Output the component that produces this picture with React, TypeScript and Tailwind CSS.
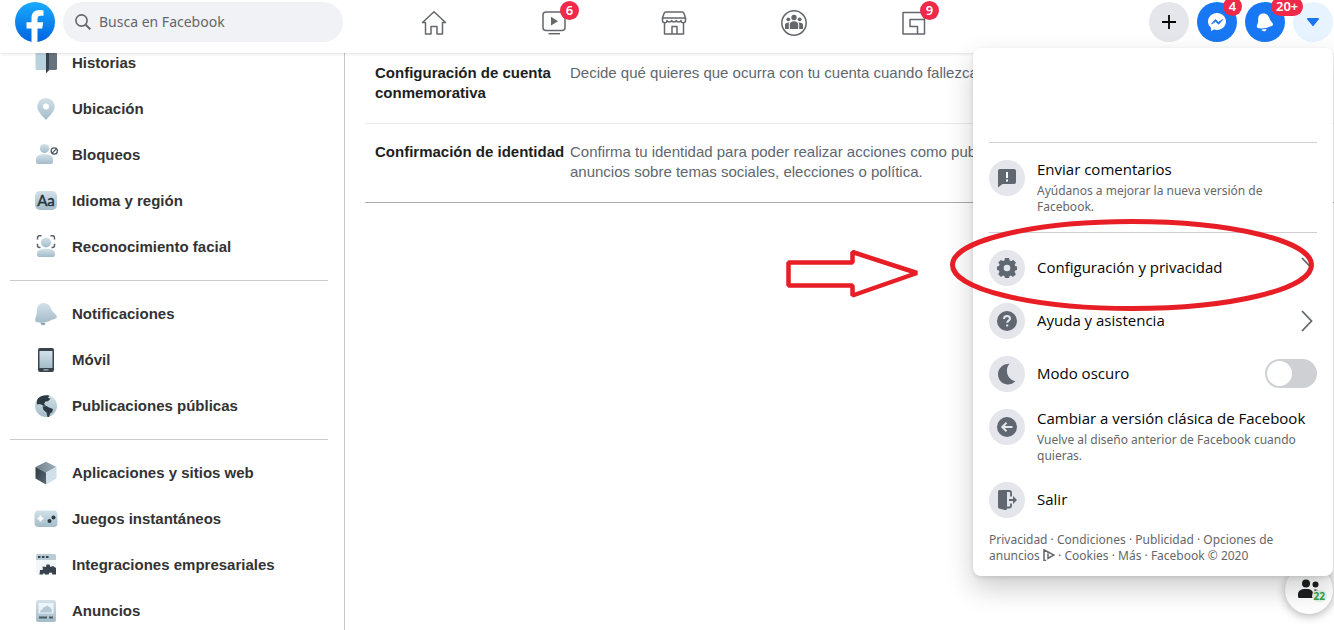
import React from "react";

type IconProps = { className?: string };

const Defs = () => (
  <svg className="absolute h-0 w-0" aria-hidden="true">
    <defs>
      <linearGradient id="pale" x1="0" y1="0" x2="0" y2="1">
        <stop offset="0" stopColor="#d3e1e9" />
        <stop offset="1" stopColor="#a3bcc9" />
      </linearGradient>
      <linearGradient id="dark" x1="0" y1="0" x2="1" y2="1">
        <stop offset="0" stopColor="#2c3a44" />
        <stop offset="1" stopColor="#5d6b77" />
      </linearGradient>
      <linearGradient id="brand" x1="0" y1="0" x2="0" y2="1">
        <stop offset="0" stopColor="#18acfe" />
        <stop offset="1" stopColor="#0163e0" />
      </linearGradient>
      <linearGradient id="cubeTop" x1="0" y1="0" x2="1" y2="0">
        <stop offset="0" stopColor="#6f7f89" />
        <stop offset="1" stopColor="#9db0bb" />
      </linearGradient>
    </defs>
  </svg>
);

const svg24 = (children: React.ReactNode) => (
  <svg viewBox="0 0 24 24" className="h-6 w-6 shrink-0" aria-hidden="true">
    {children}
  </svg>
);

const StoriesIcon = () =>
  svg24(
    <>
      <rect x="1.500" y="1" width="12" height="18" rx="1.500" fill="#b9d3de" />
      <path d="M12 3l2-2h7a2 2 0 0 1 2 2v14.500a1.500 1.500 0 0 1-1.500 1.500h-6L12 22.500z" fill="#66727d" />
      <path d="M12 1h3v17l-3 4z" fill="#37424c" />
    </>
  );
const PinIcon = () =>
  svg24(
    <>
      <path d="M12 1c-5 0-8.700 3.700-8.700 8.500 0 5.500 6 10 8.700 13.500 2.700-3.500 8.700-8 8.700-13.500C20.700 4.700 17 1 12 1z" fill="url(#pale)" />
      <circle cx="12" cy="9.500" r="3" fill="#fff" />
    </>
  );
const BlockIcon = () =>
  svg24(
    <>
      <circle cx="10.500" cy="5.500" r="4.600" fill="url(#pale)" />
      <path d="M2 19v-2.500C2 13 5 11.200 10.500 11.200s8.500 1.800 8.500 5.300V19a2 2 0 0 1-2 2H4a2 2 0 0 1-2-2z" fill="url(#pale)" />
      <circle cx="20.300" cy="8" r="3.100" fill="#fff" stroke="#4d5963" strokeWidth="1.300" />
      <path d="M18.200 10.100l4.200-4.200" stroke="#4d5963" strokeWidth="1.300" />
    </>
  );
const LanguageIcon = () =>
  svg24(
    <>
      <rect x="1" y="2" width="22" height="19" rx="5" fill="url(#pale)" />
      <text x="12" y="16.500" textAnchor="middle" fontSize="15" fontWeight="400" fill="#25333c" stroke="#25333c" strokeWidth="0.400" fontFamily="Lato, sans-serif">
        Aa
      </text>
    </>
  );
const FaceIcon = () =>
  svg24(
    <>
      <circle cx="12" cy="7.500" r="5" fill="url(#pale)" />
      <path d="M3 20v-1.500c0-3 3-4.700 9-4.700s9 1.700 9 4.700V20a2 2 0 0 1-2 2H5a2 2 0 0 1-2-2z" fill="url(#pale)" />
      <path d="M3.500 4.500V2.700a2 2 0 0 1 2-2h2M16.500.7h2a2 2 0 0 1 2 2v1.800M3.500 8.700v1.800a2 2 0 0 0 2 2h1M20.500 8.700v1.800a2 2 0 0 1-2 2h-1" fill="none" stroke="#56636d" strokeWidth="1.500" />
    </>
  );
const SideBellIcon = () =>
  svg24(
    <>
      <path d="M6.500 20.500c2 .2 3.800.4 5 .8-.3 1.500-1.500 2.200-2.700 1.900-1.300-.3-2.300-1.300-2.300-2.700z" fill="#8aa3b0" />
      <path d="M9 1C4.500 1.500 3 5 3 9c0 4-2 7-1.800 9.500.1 2 3 2 6.800 2.300 4-.2 6-1.300 9-2.600 3-1.200 5.800-1.600 5.800-3.500 0-2.500-3.800-3.500-5-6.700C16.500 4 13.500.5 9 1z" fill="url(#pale)" />
    </>
  );
const MobileIcon = () =>
  svg24(
    <>
      <rect x="4" y="0" width="16" height="24" rx="2" fill="#38444d" />
      <rect x="5.500" y="3" width="13" height="17" fill="url(#pale)" />
      <rect x="9.500" y="21.300" width="5" height="1.200" fill="#a9bac4" />
    </>
  );
const GlobeIcon = () =>
  svg24(
    <>
      <circle cx="12" cy="12" r="11" fill="url(#pale)" />
      <path d="M4 4.500C7 1.500 12 .8 15.500 1.800l-1.500 2 2.500 1-2.500 2.500-2.500.2-1.500 2.500 2 1.500-2 .5-4-2-3 .5C2.500 8.500 3 6 4 4.500z" fill="#2c3a44" />
      <path d="M8.500 12.500l4-.5 2.500 1.500 4 1.500-.8 3-2.200 1.500L15 23h-1.500l-1-4.500-3-2.500z" fill="#2c3a44" />
    </>
  );
const CubeIcon = () =>
  svg24(
    <>
      <path d="M12 .8L22.500 6 12 11.500 1.500 6z" fill="url(#cubeTop)" />
      <path d="M1.500 6L12 11.500V23.500L1.500 17.500z" fill="url(#dark)" />
      <path d="M22.500 6L12 11.500V23.500l10.500-6z" fill="#cfe0e8" />
    </>
  );
const GamepadIcon = () =>
  svg24(
    <>
      <rect x="0.500" y="3.500" width="23" height="16.500" rx="4" fill="url(#pale)" />
      <path d="M6.500 8.500v6M3.500 11.500h6" stroke="#fff" strokeWidth="2" />
      <circle cx="15.500" cy="14" r="2" fill="#2c3a44" />
      <circle cx="19.500" cy="10.500" r="2" fill="#2c3a44" />
    </>
  );
const BusinessIcon = () =>
  svg24(
    <>
      <path d="M2 3a2 2 0 0 1 2-2h16a2 2 0 0 1 2 2v4H2z" fill="#b9cbd5" />
      <path d="M2 7h20v15H2z" fill="#f3f7f9" />
      <path d="M4 4h2.500M8 4h2.500M12 4h2.500" stroke="#37424c" strokeWidth="2.200" />
      <path d="M8.500 13.500l3.500.5.500-2.500h3l1 2.500 2.500-1 3 2v6.500h-3.500l-1-2-2 .2-1 1.800H11l-1-1.500-1.500 1.500H5.500l.5-4.500 3-.2z" fill="#37424c" />
    </>
  );
const AdsIcon = () =>
  svg24(
    <>
      <rect x="2" y="1" width="20" height="22" rx="2.500" fill="url(#pale)" />
      <rect x="4.500" y="4" width="15" height="10.500" fill="#edf4f8" />
      <path d="M6 13.500c0-2 1-3 2.500-3 .5-2 1.500-3 2.500-2 1-2 3-2.500 4-.5 2 0 3 2.500 3 5.500z" fill="#b4c8d3" />
      <path d="M5 18.500h8M15 18.500h4" stroke="#4b5963" strokeWidth="2" />
    </>
  );

type SideItem = { label: string; Icon: () => React.ReactElement };
const groups: SideItem[][] = [
  [
    { label: "Historias", Icon: StoriesIcon },
    { label: "Ubicación", Icon: PinIcon },
    { label: "Bloqueos", Icon: BlockIcon },
    { label: "Idioma y región", Icon: LanguageIcon },
    { label: "Reconocimiento facial", Icon: FaceIcon },
  ],
  [
    { label: "Notificaciones", Icon: SideBellIcon },
    { label: "Móvil", Icon: MobileIcon },
    { label: "Publicaciones públicas", Icon: GlobeIcon },
  ],
  [
    { label: "Aplicaciones y sitios web", Icon: CubeIcon },
    { label: "Juegos instantáneos", Icon: GamepadIcon },
    { label: "Integraciones empresariales", Icon: BusinessIcon },
    { label: "Anuncios", Icon: AdsIcon },
  ],
];

const Sidebar = () => (
  <nav aria-label="Configuración" className="w-[345px] shrink-0 border-r border-[#c4c6ca] pr-4 pl-2.5">
    <div className="-mt-[13px]">
      {groups.map((items, i) => (
        <ul key={i} className={i > 0 ? "mt-2.5 border-t border-[#c8cacd] pt-2.5" : ""}>
          {items.map(({ label, Icon }) => (
            <li key={label}>
              <a href="#" className="flex h-[46px] items-center gap-3.5 pl-6 text-[15px] font-bold text-[#333]">
                <Icon />
                {label}
              </a>
            </li>
          ))}
        </ul>
      ))}
    </div>
  </nav>
);

const HomeIcon = () => <path d="M1.500 12.500L13 1.700l11.500 10.800h-3V24H16v-7.500h-6V24H4.500V12.500z" />;
const WatchIcon = () => (
  <>
    <rect x="2" y="2" width="22" height="18.500" rx="3" />
    <path d="M7.500 23.700h11.500" />
    <path d="M10 6.800v8.800l7-4.400z" fill="#65676b" stroke="none" />
  </>
);
const StoreIcon = () => (
  <>
    <path d="M5 2h16a2 2 0 0 1 2 1.500l1.500 4.500h-23L3 3.500A2 2 0 0 1 5 2z" />
    <path d="M1.500 8v2.500c0 1.500 1 2.300 2.200 2.300S6 12 6 10.500c.5 2 4 2 4.700 0 .5 2 4 2 4.600 0 .5 2 4 2 4.700 0 0 1.500 1.100 2.300 2.300 2.300s2.200-.8 2.200-2.300V8M3.500 12.800V24h19V12.800M11 24v-7.500h5V24" />
  </>
);
const GroupsIcon = () => (
  <>
    <circle cx="13" cy="13" r="12.200" />
    <g fill="#65676b" stroke="none">
      <circle cx="13" cy="7.500" r="2.700" />
      <circle cx="7.300" cy="9.300" r="1.900" />
      <circle cx="18.700" cy="9.300" r="1.900" />
      <path d="M8.800 19v-4.500c0-2 1.500-3.300 4.200-3.300s4.200 1.300 4.200 3.300V19zM7.800 19H4V15c0-1.900 1.500-2.700 4.300-2.600-.4.700-.5 1.300-.5 2.100zM18.200 19H22V15c0-1.900-1.500-2.700-4.300-2.600.4.700.5 1.300.5 2.100z" />
    </g>
  </>
);
const GamingIcon = () => <path d="M23.500 2.500H2v21.500h21.500V9.500H9v7h7.500v7.500M23.500 2.500v7" />;

const tabs = [
  { label: "Inicio", Icon: HomeIcon, badge: "" },
  { label: "Watch", Icon: WatchIcon, badge: "6" },
  { label: "Marketplace", Icon: StoreIcon, badge: "" },
  { label: "Grupos", Icon: GroupsIcon, badge: "" },
  { label: "Videojuegos", Icon: GamingIcon, badge: "9" },
];

const Badge = ({ children, className }: { children: React.ReactNode; className: string }) => (
  <span className={"absolute flex h-[19px] min-w-[19px] items-center justify-center rounded-full bg-[#f02849] px-[5px] text-[13px] leading-none font-semibold text-white " + className}>
    {children}
  </span>
);

const Header = () => (
  <header className="relative z-10 grid h-[53px] shrink-0 grid-cols-[374px_minmax(0,600px)_1fr] items-start bg-white pt-0.5 font-['Noto_Sans','Open_Sans',sans-serif] shadow-[0_1px_3px_rgba(0,0,0,0.12)]">
    <div className="flex items-center gap-2 pl-[15px]">
      <a href="#" aria-label="Facebook" className="shrink-0">
        <svg viewBox="0 0 40 40" className="h-10 w-10">
          <circle cx="20" cy="20" r="20" fill="url(#brand)" />
          <path d="M16.500 39.700V26.500h-5v-6.200h5v-3.600c0-6 3.200-8.700 8-8.700 1.800 0 3.200.2 4 .4v5.400h-2.700c-2.400 0-3.300 1.200-3.300 3.200v3.300h5.700l-1 6.200h-4.700v13.300a20 20 0 0 1-6-.1z" fill="#fff" />
        </svg>
      </a>
      <label className="flex h-10 w-[280px] items-center gap-2 rounded-full bg-[#f0f2f5] pl-3">
        <svg viewBox="0 0 16 16" className="h-4 w-4 shrink-0" fill="none" stroke="#65676b" strokeWidth="1.600" aria-hidden="true">
          <circle cx="6.500" cy="6.500" r="5.600" />
          <path d="M10.700 10.700l4.600 4.600" strokeWidth="2" />
        </svg>
        <input aria-label="Busca en Facebook" placeholder="Busca en Facebook" className="w-full min-w-0 bg-transparent text-sm text-[#1c1e21] outline-none placeholder:text-[#65676b]" />
      </label>
    </div>
    <nav aria-label="Principal" className="flex">
      {tabs.map(({ label, Icon, badge }) => (
        <a key={label} href="#" aria-label={label} className="flex h-[41px] flex-1 items-center justify-center">
          <span className="relative">
            <svg viewBox="0 0 26 26" className="h-[26px] w-[26px]" fill="none" stroke="#65676b" strokeWidth="1.500" strokeLinejoin="round">
              <Icon />
            </svg>
            {badge && <Badge className="-top-[9px] left-[19px]">{badge}</Badge>}
          </span>
        </a>
      ))}
    </nav>
    <div className="flex justify-end gap-2 pr-px">
      <button aria-label="Crear" className="flex h-10 w-10 items-center justify-center rounded-full bg-[#e4e6eb]">
        <svg viewBox="0 0 14 14" className="h-3.5 w-3.5" stroke="#050505" strokeWidth="1.800">
          <path d="M7 0v14M0 7h14" />
        </svg>
      </button>
      <button aria-label="Messenger" className="relative flex h-10 w-10 items-center justify-center rounded-full bg-[#1877f2]">
        <svg viewBox="0 0 20 20" className="h-5 w-5">
          <path d="M10 1C5 1 1 4.700 1 9.500c0 2.600 1.100 4.700 3 6.300V19l3-1.500c1 .3 2 .4 3 .4 5 0 9-3.600 9-8.400S15 1 10 1z" fill="#fff" />
          <path d="M4.500 12l4-4.500 3 2.700 4.200-2.700-4 4.700-3-2.700z" fill="#1877f2" stroke="#1877f2" strokeWidth="0.800" strokeLinejoin="round" />
        </svg>
        <Badge className="-top-[5px] left-[26px]">4</Badge>
      </button>
      <button aria-label="Notificaciones" className="relative flex h-10 w-10 items-center justify-center rounded-full bg-[#1877f2]">
        <svg viewBox="0 0 20 20" className="h-5 w-5" fill="#fff">
          <path d="M7.500 1.500C4 2 3 4.800 3.200 8c.2 3-1.500 5-1.400 6.800.1 1.300 1.500 1.600 4.700 1.700 3.500 0 5.500-.7 8-1.700 2.200-.8 3.500-1.200 3.500-2.400 0-1.800-2.300-2.800-3.200-5.400C13.800 3.500 11.500.9 7.500 1.500z" />
          <path d="M6.500 17.500l5-.6c-.2 1.500-1.200 2.300-2.500 2.300-1.200 0-2.200-.6-2.500-1.700z" />
        </svg>
        <Badge className="-top-[5px] left-[26px]">20+</Badge>
      </button>
      <button aria-label="Cuenta" className="flex h-10 w-10 items-center justify-center rounded-full bg-[#e7f3ff]">
        <svg viewBox="0 0 14 10" className="h-2.5 w-3.5">
          <path d="M1.700 1h10.600a.8.8 0 0 1 .6 1.300L7.800 8.600a1 1 0 0 1-1.600 0L1.100 2.300A.8.8 0 0 1 1.700 1z" fill="#1876f2" />
        </svg>
      </button>
    </div>
  </header>
);

const rows = [
  {
    title: "Configuración de cuenta conmemorativa",
    text: "Decide qué quieres que ocurra con tu cuenta cuando fallezcas.",
    line: "border-[#e9eaeb]",
  },
  {
    title: "Confirmación de identidad",
    text: "Confirma tu identidad para poder realizar acciones como publicar anuncios sobre temas sociales, elecciones o política.",
    line: "border-[#a9abae]",
  },
];

const Content = () => (
  <main className="min-w-0 flex-1 pl-5">
    <dl className="-mt-2">
      {rows.map((r) => (
        <div key={r.title} className={"flex border-b pt-[18px] pb-5 pl-2.5 text-[15px] leading-5 " + r.line}>
          <dt className="w-[195px] shrink-0 font-bold text-[#1c1e21]">{r.title}</dt>
          <dd className="max-w-[450px] text-[#606770]">{r.text}</dd>
        </div>
      ))}
    </dl>
  </main>
);

const FeedbackIcon = () => (
  <>
    <path d="M3 1h14a2 2 0 0 1 2 2v11a2 2 0 0 1-2 2H5.500L1 19.500V3a2 2 0 0 1 2-2z" />
    <path d="M10 4v6M10 11.500v2" stroke="#fff" strokeWidth="2" />
  </>
);
const GearIcon = () => (
  <>
    <path d="M8 0h4l.6 2.500 1.400.6L16.300 2 19 4.600l-1.300 2 .5 1.500L20 8.500v3.500l-1.800.6-.6 1.400 1.300 2.200L16 19l-2.200-1.400-1.300.5L12 20H8l-.6-2-1.400-.5L4 19 1.200 16.300l1.200-2.200L2 12.500 0 12V8.500L2 8l.6-1.500L1.200 4.600 3.800 2 6 3.100l1.400-.6z" strokeLinejoin="round" />
    <circle cx="10" cy="10" r="3.300" fill="#e4e6eb" />
  </>
);
const HelpIcon = () => (
  <>
    <circle cx="10" cy="10" r="10" />
    <path d="M7 8c0-2 1.300-3 3-3s3 1 3 2.600c0 2-2.800 2.100-2.800 4.200M10.200 13.500v2" fill="none" stroke="#e4e6eb" strokeWidth="2" />
  </>
);
const MoonIcon = () => (
  <path d="M12.500-.3C10 2.500 9.300 6 10.300 9.700c1.100 3.800 3.700 6.500 8 7.600-2 2.200-5 3.400-8 3.200C4.800 20 1 15.800 1 10.300 1 4.500 5.500-.3 12.500-.3z" />
);
const BackIcon = () => (
  <>
    <circle cx="10" cy="10" r="10" />
    <path d="M15.500 10h-10M9.500 5.800L5.300 10l4.200 4.200" fill="none" stroke="#e4e6eb" strokeWidth="2" />
  </>
);
const ExitIcon = () => (
  <>
    <path d="M1 1.500A1.500 1.500 0 0 1 2.500 0l6 1.200A1.500 1.500 0 0 1 10 2.800v15.700a1.500 1.500 0 0 1-2 1.400L2 18.500a1.500 1.500 0 0 1-1-1.300z" />
    <path d="M4 1h8.500a1.500 1.500 0 0 1 1.500 1.500v4M10 17.500h2.500A1.500 1.500 0 0 0 14 16v-2.500" fill="none" stroke="#606770" strokeWidth="1.800" />
    <path d="M12 9h4V6l4 4-4 4v-3h-4z" />
  </>
);

const MenuIcon = ({ children }: { children: React.ReactNode }) => (
  <span className="flex h-9 w-9 shrink-0 items-center justify-center rounded-full bg-[#e4e6eb]">
    <svg viewBox="0 0 20 20" className="h-5 w-5 overflow-visible" fill="#606770" aria-hidden="true">
      {children}
    </svg>
  </span>
);
const Chevron = ({ className }: IconProps) => (
  <svg viewBox="0 0 12 22" className={"h-[22px] w-3 " + (className ?? "")} fill="none" stroke="#65676b" strokeWidth="1.800" aria-hidden="true">
    <path d="M1 1l9.500 10L1 21" />
  </svg>
);
const Row = ({ icon, label, chevron }: { icon: React.ReactNode; label: string; chevron?: boolean }) => (
  <button className="flex h-[53px] w-full items-center gap-3 text-left text-[15px] text-[#050505]">
    <MenuIcon>{icon}</MenuIcon>
    <span className="flex-1">{label}</span>
    {chevron && <Chevron className="mr-1" />}
  </button>
);
const DetailRow = ({ icon, label, detail }: { icon: React.ReactNode; label: string; detail: string }) => (
  <button className="flex w-full items-start gap-3 py-[9px] text-left">
    <MenuIcon>{icon}</MenuIcon>
    <span className="flex-1">
      <span className="block text-[15px] leading-[18px] text-[#050505]">{label}</span>
      <span className="mt-[5px] block font-['Noto_Sans',sans-serif] text-xs leading-4 text-[#65676b]">{detail}</span>
    </span>
  </button>
);

const Dot = () => <span> · </span>;

const AccountMenu = () => (
  <div className="absolute top-12 right-px z-20 w-[360px] rounded-lg bg-white px-4 pb-3 font-['Open_Sans','Noto_Sans',sans-serif] shadow-[0_12px_28px_rgba(0,0,0,0.2),0_2px_4px_rgba(0,0,0,0.1)]">
    <div className="h-[94px]" />
    <div className="border-y border-[#ced0d4] py-2">
      <DetailRow icon={<FeedbackIcon />} label="Enviar comentarios" detail="Ayúdanos a mejorar la nueva versión de Facebook." />
    </div>
    <div className="pt-2">
      <Row icon={<GearIcon />} label="Configuración y privacidad" chevron />
      <Row icon={<HelpIcon />} label="Ayuda y asistencia" chevron />
      <label className="flex h-[53px] items-center gap-3 text-[15px] text-[#050505]">
        <MenuIcon>
          <MoonIcon />
        </MenuIcon>
        <span className="flex-1">Modo oscuro</span>
        <input type="checkbox" role="switch" className="h-[29px] w-[52px] appearance-none rounded-full bg-[#ced0d4] p-0.5 before:block before:h-[25px] before:w-[25px] before:rounded-full before:bg-white checked:bg-[#1877f2] checked:before:ml-auto" />
      </label>
      <DetailRow icon={<BackIcon />} label="Cambiar a versión clásica de Facebook" detail="Vuelve al diseño anterior de Facebook cuando quieras." />
      <Row icon={<ExitIcon />} label="Salir" />
    </div>
    <p className="mt-1.5 font-['Noto_Sans',sans-serif] text-xs leading-4 text-[#65676b]">
      <a href="#">Privacidad</a>
      <Dot />
      <a href="#">Condiciones</a>
      <Dot />
      <a href="#">Publicidad</a>
      <Dot />
      <a href="#">
        <span>Opciones de </span>
        <span>anuncios </span>
        <svg viewBox="0 0 12 12" className="inline h-3 w-3 align-[-1px]" fill="none" stroke="#65676b" strokeWidth="1.500" aria-hidden="true">
          <path d="M3 11.200L1 12V.8L11 6l-6 3.500V5M5 3.500v1" />
        </svg>
      </a>
      <Dot />
      <a href="#">Cookies</a>
      <Dot />
      <a href="#">Más</a>
      <Dot />
      <span>Facebook © 2020</span>
    </p>
  </div>
);

const Contacts = () => (
  <button aria-label="Contactos" className="absolute right-px bottom-4 flex h-12 w-12 items-center justify-center rounded-full bg-white shadow-[0_2px_10px_rgba(0,0,0,0.3)]">
    <svg viewBox="0 0 24 24" className="h-6 w-6" fill="#1c1e21">
      <circle cx="9" cy="5.500" r="4" />
      <circle cx="18.500" cy="6.500" r="3" />
      <path d="M1 18.500v-2c0-3.500 2.500-5.500 8-5.500s7 2 7 5V20H2.500A1.500 1.500 0 0 1 1 18.500zM17 11.500c3.500-.5 6 1 6 4h-5c0-1.600-.3-3-1-4z" />
    </svg>
    <span className="absolute right-1.5 bottom-3 rounded-full bg-[#e6f2e8] px-0.5 font-['Noto_Sans',sans-serif] text-[10px] leading-3 font-bold text-[#31a24c]">22</span>
  </button>
);

const Annotations = () => (
  <svg viewBox="0 0 530 96" className="pointer-events-none absolute top-[217px] right-[18px] z-30 h-24 w-[530px]" fill="none" stroke="#e71e25" aria-hidden="true">
    <path d="M2.500 45.500h64V35L131 56 66.500 78.500V68.500h-64z" strokeWidth="4.500" strokeLinejoin="bevel" />
    <ellipse cx="346" cy="48" rx="179.500" ry="43.500" strokeWidth="5" />
  </svg>
);

export default function App() {
  return (
    <div className="relative flex h-screen flex-col overflow-hidden bg-white font-['Liberation_Sans',Arial,sans-serif]">
      <Defs />
      <Header />
      <div className="flex min-h-0 flex-1">
        <Sidebar />
        <Content />
      </div>
      <Contacts />
      <AccountMenu />
      <Annotations />
    </div>
  );
}
